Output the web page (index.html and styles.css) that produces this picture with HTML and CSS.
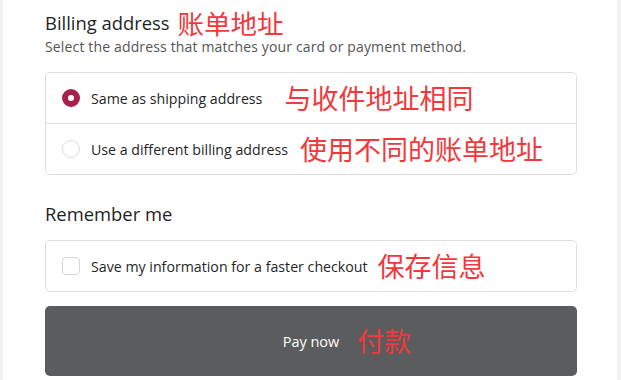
FILE: index.html
```html
<!DOCTYPE html>
<html lang="en">
<head>
<meta charset="utf-8">
<link rel="stylesheet" href="styles.css">
</head>
<body>
<div class="panel">
  <div class="section">
    <h2 class="title">Billing address<span class="note note-title">账单地址</span></h2>
    <p class="sub">Select the address that matches your card or payment method.</p>
  </div>
  <div class="box">
    <label class="row">
      <span class="radio checked"></span>
      <span class="label">Same as shipping address</span>
      <span class="note note-row1">与收件地址相同</span>
    </label>
    <label class="row divider">
      <span class="radio"></span>
      <span class="label">Use a different billing address</span>
      <span class="note note-row2">使用不同的账单地址</span>
    </label>
  </div>
  <h2 class="title title-remember">Remember me</h2>
  <div class="box">
    <label class="row">
      <span class="check"></span>
      <span class="label">Save my information for a faster checkout</span>
      <span class="note note-row3">保存信息</span>
    </label>
  </div>
  <button class="pay"><span class="pay-text">Pay now</span><span class="note note-pay">付款</span></button>
</div>
</body>
</html>
```

FILE: styles.css
```css
html, body {
  margin: 0;
  padding: 0;
  height: 100%;
}
body {
  background: #f1f1f1;
  font-family: "Open Sans", "Noto Sans", sans-serif;
  color: #1f1f1f;
  overflow: hidden;
}
.panel {
  background: #ffffff;
  margin: 0 4px 0 3px;
  padding: 0 40px 0 42px;
  height: 100%;
  box-sizing: border-box;
}
.section {
  padding-top: 10px;
}
.title {
  margin: 0;
  font-size: 18.4px;
  font-weight: 400;
  line-height: 26px;
  height: 26px;
  color: #1f1f1f;
  display: flex;
  align-items: center;
}
.sub {
  margin: 2px 0 16px;
  font-size: 14px;
  letter-spacing: 0.15px;
  line-height: 18px;
  color: #555;
}
.note {
  font-family: "Noto Sans CJK SC", sans-serif;
  color: #f2383b;
  font-size: 27px;
  line-height: 30px;
  letter-spacing: 0;
}
.note-title { margin-left: 8px; line-height: 26px; font-size: 26.5px; }
.box {
  border: 1px solid #dedede;
  border-radius: 5px;
}
.row {
  display: flex;
  align-items: center;
  height: 50px;
  padding-left: 16px;
}
.divider {
  border-top: 1px solid #dedede;
}
.radio {
  width: 18px;
  height: 18px;
  border-radius: 50%;
  border: 1px solid #dcdcdc;
  box-sizing: border-box;
  flex: none;
}
.radio.checked {
  border: 6.5px solid #a8204e;
  background: #fff;
}
.check {
  width: 18px;
  height: 18px;
  border-radius: 4px;
  border: 1px solid #d6d6d6;
  box-sizing: border-box;
  flex: none;
}
.label {
  margin-left: 11px;
  font-size: 14.2px;
  color: #262626;
}
.note-row1 { margin-left: 22px; }
.note-row2 { margin-left: 12px; }
.note-row3 { margin-left: 10px; }
.title-remember {
  margin-top: 26px;
  margin-bottom: 13px;
}
.pay {
  display: grid;
  grid-template-columns: 1fr auto 1fr;
  align-items: center;
  width: 100%;
  height: 70px;
  margin-top: 14px;
  border: none;
  border-radius: 5px;
  background: #5b5c5d;
  color: #fff;
  font-family: "Open Sans", "Noto Sans", sans-serif;
  font-size: 14.5px;
  padding: 0;
}
.pay-text { grid-column: 2; }
.note-pay { grid-column: 3; justify-self: start; margin-left: 18px; }
```
